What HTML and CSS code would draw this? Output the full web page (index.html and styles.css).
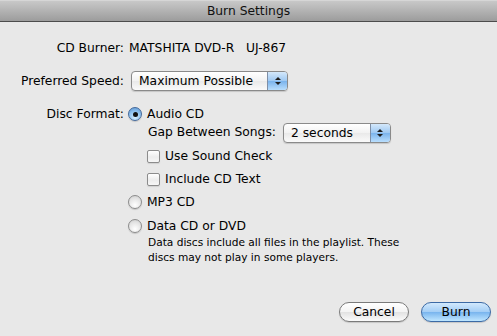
FILE: index.html
```html
<!DOCTYPE html>
<html lang="en">
<head>
    <meta charset="UTF-8">
    <title>Burn Settings</title>
    <link rel="stylesheet" href="styles.css">
</head>
<body>

<div class="dialog">
    <div class="titlebar">Burn Settings</div>

    <div class="settings">
        <div class="label">CD Burner:</div>
        <div class="value">MATSHITA DVD-R&nbsp;&nbsp;&nbsp;UJ-867</div>

        <div class="label">Preferred Speed:</div>
        <div class="value">
            <div class="popup popup-speed">
                <span class="popup-text">Maximum Possible</span>
                <span class="popup-arrows"><i class="up"></i><i class="down"></i></span>
            </div>
        </div>

        <div class="label">Disc Format:</div>
        <div class="formats">
            <div class="option">
                <span class="radio checked"></span>
                <span>Audio CD</span>
            </div>
            <div class="suboptions">
                <div class="gap-row">
                    <span>Gap Between Songs:</span>
                    <div class="popup popup-gap">
                        <span class="popup-text">2 seconds</span>
                        <span class="popup-arrows"><i class="up"></i><i class="down"></i></span>
                    </div>
                </div>
                <div class="check-row">
                    <span class="checkbox"></span>
                    <span>Use Sound Check</span>
                </div>
                <div class="check-row">
                    <span class="checkbox"></span>
                    <span>Include CD Text</span>
                </div>
            </div>
            <div class="option option-spaced">
                <span class="radio"></span>
                <span>MP3 CD</span>
            </div>
            <div class="option option-spaced">
                <span class="radio"></span>
                <span>Data CD or DVD</span>
            </div>
            <p class="note">Data discs include all files in the playlist. These<br>discs may not play in some players.</p>
        </div>
    </div>

    <div class="buttons">
        <button class="btn">Cancel</button>
        <button class="btn btn-default">Burn</button>
    </div>
</div>

</body>
</html>
```

FILE: styles.css
```css
body {
    margin: 0;
    padding: 0;
    font-family: 'DejaVu Sans', sans-serif;
    font-size: 12.3px;
    color: #000000;
    background-color: #E8E8E8;
}

.dialog {
    height: 336px;
    display: flex;
    flex-direction: column;
    background-color: #E8E8E8;
}

.titlebar {
    height: 22px;
    line-height: 20px;
    text-align: center;
    background: linear-gradient(#C8C8C8, #9C9C9C);
    border-top: 1px solid #D6D6D6;
    border-bottom: 1px solid #4C4C4C;
    box-sizing: border-box;
    color: #111111;
}

.settings {
    display: grid;
    grid-template-columns: 124px auto;
    column-gap: 5px;
    row-gap: 11px;
    padding-top: 15px;
    align-items: start;
}

.label {
    text-align: right;
    height: 22px;
    line-height: 22px;
}

.value {
    height: 22px;
    line-height: 22px;
}

.popup {
    display: flex;
    height: 20px;
    margin-top: 1px;
    margin-left: 2px;
    border: 1px solid #8A8A8A;
    border-radius: 4px;
    box-sizing: border-box;
    background: linear-gradient(#FFFFFF, #F2F2F2 50%, #E9E9E9 51%, #FAFAFA);
    box-shadow: 0 1px 1px rgba(0, 0, 0, 0.15);
    overflow: hidden;
}

.popup-speed {
    width: 157px;
}

.popup-gap {
    width: 108px;
    margin-left: 0;
}

.popup-text {
    flex: 1;
    padding-left: 7px;
    line-height: 18px;
}

.popup-arrows {
    width: 19px;
    display: flex;
    flex-direction: column;
    align-items: center;
    justify-content: center;
    gap: 2px;
    border-left: 1px solid #7F8FA6;
    background: linear-gradient(#D4E8FB, #9DC8F2 50%, #7AB3EC 51%, #B9DEFD);
}

.popup-arrows i {
    width: 0;
    height: 0;
    border-left: 3px solid transparent;
    border-right: 3px solid transparent;
}

.popup-arrows .up {
    border-bottom: 3px solid #1E1E1E;
}

.popup-arrows .down {
    border-top: 3px solid #1E1E1E;
}

.formats {
    display: flex;
    flex-direction: column;
    margin-left: -1px;
}

.option {
    display: flex;
    align-items: center;
    gap: 5px;
    height: 22px;
}

.option-spaced {
    margin-top: 3px;
}

.option-spaced + .option-spaced {
    margin-top: 2px;
}

.radio {
    width: 14px;
    height: 14px;
    border-radius: 50%;
    box-sizing: border-box;
    border: 1px solid #8C8C8C;
    background: radial-gradient(circle at 50% 75%, #FFFFFF, #E4E4E4 60%, #C9C9C9);
    box-shadow: 0 1px 1px rgba(0, 0, 0, 0.15);
    display: flex;
    align-items: center;
    justify-content: center;
}

.radio.checked {
    border-color: #44699A;
    background: radial-gradient(circle at 50% 80%, #D5EEFF, #8CC0EE 55%, #5B93D0);
}

.radio.checked::after {
    content: "";
    width: 5px;
    height: 5px;
    border-radius: 50%;
    background-color: #111111;
}

.suboptions {
    display: flex;
    flex-direction: column;
    padding-left: 20px;
    margin-top: -3px;
}

.gap-row {
    display: flex;
    align-items: center;
    gap: 7px;
    height: 20px;
}

.check-row {
    display: flex;
    align-items: center;
    gap: 5px;
    height: 18px;
    margin-top: 5px;
    margin-left: -1px;
}

.checkbox {
    width: 13px;
    height: 13px;
    box-sizing: border-box;
    border: 1px solid #8C8C8C;
    border-radius: 2px;
    background: linear-gradient(#FFFFFF, #EDEDED 55%, #F7F7F7);
    box-shadow: 0 1px 1px rgba(0, 0, 0, 0.1);
}

.note {
    margin: -2px 0 0;
    padding-left: 20px;
    font-size: 10.6px;
    line-height: 15px;
}

.buttons {
    margin-top: auto;
    display: flex;
    justify-content: flex-end;
    gap: 12px;
    padding: 0 6px 14px 0;
}

.btn {
    width: 70px;
    height: 20px;
    padding: 0;
    font-family: 'DejaVu Sans', sans-serif;
    font-size: 12.3px;
    color: #000000;
    border: 1px solid #7A7A7A;
    border-radius: 10px;
    background: linear-gradient(#FFFFFF, #F3F3F3 50%, #E2E2E2 51%, #FBFBFB);
    box-shadow: 0 1px 1px rgba(0, 0, 0, 0.15);
}

.btn-default {
    border-color: #3C6AA5;
    background: linear-gradient(#D2E9FD, #A2CDF5 50%, #78B4EE 51%, #BFE6FF);
}
```
